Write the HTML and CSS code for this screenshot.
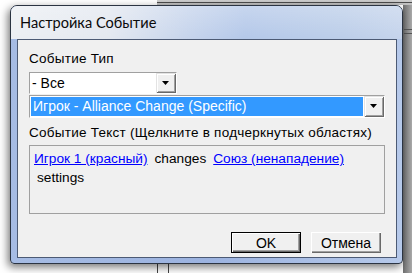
FILE: index.html
```html
<!DOCTYPE html>
<html lang="ru">
  <head>
    <meta charset="UTF-8" />
    <meta name="viewport" content="width=device-width, initial-scale=1.0" />
    <title>Настройка Событие</title>
    <link rel="stylesheet" href="styles.css">
  </head>
  <body>
    <div class="window">
      <div class="title-bar">Настройка Событие</div>
      <div class="client">
        <div class="field-label">Событие Тип</div>
        <div class="combo combo-short">
          <div class="combo-value">- Все</div>
          <div class="combo-btn">
            <svg width="8" height="5" viewBox="0 0 8 5"><polygon points="0,0 7,0 3.5,4" fill="#000" /></svg>
          </div>
        </div>
        <div class="combo combo-wide">
          <div class="combo-value selected">Игрок - Alliance Change (Specific)</div>
          <div class="combo-btn">
            <svg width="8" height="5" viewBox="0 0 8 5"><polygon points="0,0 7,0 3.5,4" fill="#000" /></svg>
          </div>
        </div>
        <div class="field-label text-label">Событие Текст (Щелкните в подчеркнутых областях)</div>
        <div class="event-text">
          <a class="event-link" href="#">Игрок 1 (красный)</a>
          <span class="event-word">changes</span>
          <a class="event-link" href="#">Союз (ненападение)</a>
          <span class="event-word">settings</span>
        </div>
        <div class="button-row">
          <button class="btn btn-default">OK</button>
          <button class="btn">Отмена</button>
        </div>
      </div>
    </div>
  </body>
</html>
```

FILE: styles.css
```css
html,
body {
  margin: 0;
  height: 273px;
  overflow: hidden;
}
body {
  padding: 5px 0 0 10px;
  box-sizing: border-box;
  font-family: "Liberation Sans", Arial, sans-serif;
  font-size: 13.5px;
  background:
    linear-gradient(#4d4d4d, #4d4d4d) 157px 2px / 255px 1px no-repeat,
    linear-gradient(#cfcfcf, #bdbdbd) 157px 0 / 255px 5px no-repeat,
    linear-gradient(#555, #555) 157px 0 / 1px 5px no-repeat,
    linear-gradient(#555, #555) 404px 29px / 8px 1px no-repeat,
    linear-gradient(#555, #555) 404px 33px / 8px 1px no-repeat,
    linear-gradient(to right, #6f6f6f, #a9a9a9) 403px 0 / 9px 273px no-repeat,
    linear-gradient(#444, #444) 157px 263px / 1px 10px no-repeat,
    linear-gradient(#444, #444) 168px 263px / 1px 10px no-repeat,
    #fff;
}

.window {
  width: 393px;
  height: 259px;
  box-sizing: border-box;
  border: 1px solid #2b3442;
  border-radius: 7px 7px 4px 4px;
  padding: 0 5px 5px 6px;
  display: flex;
  flex-direction: column;
  background: linear-gradient(to right, #a6bce4, #9cb3e0 50%, #b6c9ea);
  box-shadow: -2px 3px 9px rgba(0, 0, 0, 0.55);
}

.title-bar {
  height: 33px;
  margin: 0 -5px 0 -6px;
  padding-left: 9px;
  display: flex;
  align-items: center;
  border-radius: 6px 6px 0 0;
  font-family: Lato, "Noto Sans", sans-serif;
  font-size: 14.6px;
  color: #0a0a0a;
  background:
    linear-gradient(to bottom, rgba(255, 255, 255, 0.25), rgba(255, 255, 255, 0)),
    linear-gradient(to right, #eceff3 0%, #e3e8f0 25%, #c6d4ec 45%, #b4c8e9 60%, #bccee9 85%, #c5d4ec 100%);
}

.client {
  flex: 1;
  border: 1px solid #4c5a74;
  background: #f0f0f0;
  padding: 11px 11px 4px 11px;
  display: flex;
  flex-direction: column;
  color: #000;
}

.field-label {
  line-height: 16px;
  height: 16px;
  letter-spacing: 0.25px;
  white-space: nowrap;
}

.combo {
  display: flex;
  box-sizing: border-box;
  border: 1px solid;
  border-color: #a0a0a0 #fff #fff #a0a0a0;
  background: #fff;
}
.combo-short {
  width: 148px;
  height: 22px;
  margin-top: 5px;
}
.combo-wide {
  height: 23px;
  margin-top: 1px;
}
.combo-value {
  flex: 1;
  padding-left: 2px;
  line-height: 20px;
  font-size: 14px;
  white-space: nowrap;
  overflow: hidden;
}
.combo-value.selected {
  margin: 1px;
  padding-left: 2px;
  line-height: 19px;
  background: #3399ff;
  color: #fff;
}
.combo-btn {
  width: 20px;
  display: flex;
  align-items: center;
  justify-content: center;
  background: #f0f0f0;
  box-shadow:
    inset 1px 1px #e3e3e3,
    inset -1px -1px #696969,
    inset 2px 2px #fff,
    inset -2px -2px #a0a0a0;
}
.combo-btn svg {
  display: block;
}

.text-label {
  margin-top: 7px;
}

.event-text {
  margin-top: 4px;
  height: 69px;
  box-sizing: border-box;
  border: 1px solid #a0a0a0;
  padding: 5px 4px 0;
  display: flex;
  flex-wrap: wrap;
  align-content: flex-start;
  column-gap: 4px;
  row-gap: 3px;
  line-height: 16px;
  font-size: 13.7px;
}
.event-link {
  color: #0000ff;
  text-decoration: underline;
}
.event-word {
  padding: 0 3px;
}

.button-row {
  margin-top: auto;
  display: flex;
  justify-content: flex-end;
  gap: 10px;
  padding-right: 4px;
}
.btn {
  width: 70px;
  height: 21px;
  padding: 0;
  font-family: "Liberation Sans", Arial, sans-serif;
  font-size: 14px;
  color: #000;
  background: #f0f0f0;
  border: none;
  box-shadow:
    inset 1px 1px #fff,
    inset -1px -1px #696969,
    inset -2px -2px #a0a0a0;
}
.btn-default {
  border: 1px solid #000;
}
```
